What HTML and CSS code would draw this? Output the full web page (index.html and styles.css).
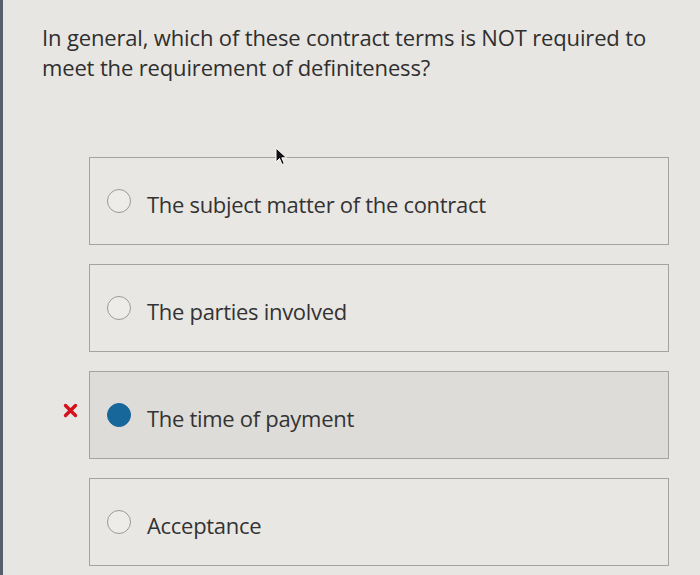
FILE: index.html
```html
<!DOCTYPE html>
<html>
<head>
<meta charset="utf-8">
<link rel="stylesheet" href="styles.css">
</head>
<body>
<div class="page">
  <p class="question">In general, which of these contract terms is NOT required to meet the requirement of definiteness?</p>
  <div class="options">
    <div class="row">
      <span class="mark"></span>
      <label class="option"><span class="radio"></span><span class="label">The subject matter of the contract</span></label>
    </div>
    <div class="row">
      <span class="mark"></span>
      <label class="option"><span class="radio"></span><span class="label">The parties involved</span></label>
    </div>
    <div class="row">
      <span class="mark"><svg class="xicon" width="15" height="15" viewBox="0 0 15 15"><path d="M2.5 2.5 L12.5 12.5 M12.5 2.5 L2.5 12.5" stroke="#d4111c" stroke-width="3.4" stroke-linecap="round"/></svg></span>
      <label class="option selected"><span class="radio filled"></span><span class="label">The time of payment</span></label>
    </div>
    <div class="row">
      <span class="mark"></span>
      <label class="option"><span class="radio"></span><span class="label">Acceptance</span></label>
    </div>
  </div>
  <svg class="cursor" width="14" height="20" viewBox="0 0 14 20"><path d="M1 1 L1 15 L4.5 11.5 L7 17.5 L9.3 16.5 L6.8 10.8 L11.5 10.8 Z" fill="#111" stroke="#fff" stroke-width="1"/></svg>
</div>
</body>
</html>
```
FILE: styles.css
```css
html, body {
  margin: 0;
  padding: 0;
  background: #e7e5e1;
}
.page {
  position: relative;
  width: 700px;
  height: 575px;
  box-sizing: border-box;
  border-left: 3px solid #56606c;
  background: #e8e6e2;
  font-family: "Open Sans", "Liberation Sans", sans-serif;
  color: #333;
  overflow: hidden;
}
.question {
  margin: 0;
  padding: 22px 30px 0 39px;
  font-size: 22px;
  line-height: 30px;
  letter-spacing: -0.15px;
  color: #2f2f2f;
}
.options {
  display: flex;
  flex-direction: column;
  gap: 19px;
  margin-top: 75px;
}
.row {
  display: flex;
  align-items: center;
}
.mark {
  width: 86px;
  flex: none;
  display: flex;
  justify-content: flex-end;
  padding-right: 11px;
  padding-bottom: 10px;
  box-sizing: border-box;
}
.option {
  width: 580px;
  height: 88px;
  box-sizing: border-box;
  border: 1px solid #a4a3a0;
  display: flex;
  align-items: center;
  padding-left: 17px;
  gap: 16px;
  background: #e9e7e3;
}
.option.selected {
  background: #dedcd8;
}
.radio {
  width: 24px;
  height: 24px;
  box-sizing: border-box;
  border: 1.5px solid #9a9a9a;
  border-radius: 50%;
  background: #eeece9;
  flex: none;
}
.radio.filled {
  background: #17679b;
  border-color: #17679b;
}
.label {
  font-size: 22px;
  letter-spacing: -0.3px;
  color: #333;
  padding-top: 6px;
}
.cursor {
  position: absolute;
  left: 272px;
  top: 147px;
}
```
